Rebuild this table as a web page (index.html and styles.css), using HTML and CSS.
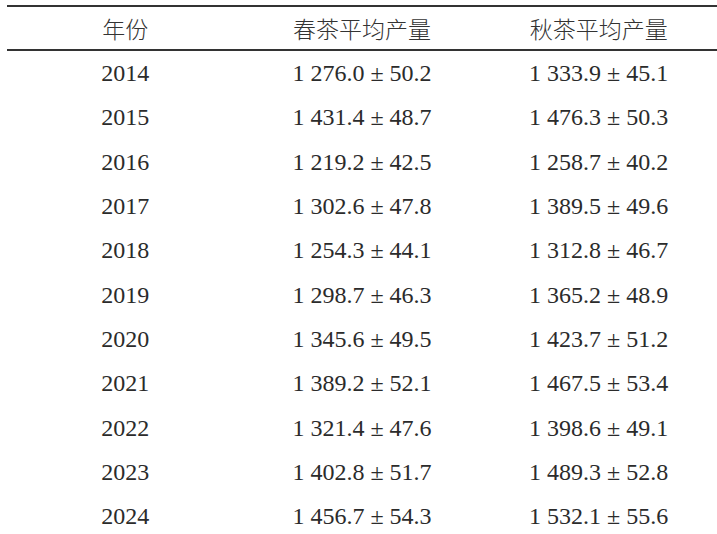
FILE: index.html
```html
<!DOCTYPE html>
<html lang="zh-CN">
<head>
<meta charset="utf-8">
<link rel="stylesheet" href="styles.css">
</head>
<body>
<div class="wrap">
<table class="data">
<thead>
<tr><th>年份</th><th>春茶平均产量</th><th>秋茶平均产量</th></tr>
</thead>
<tbody>
<tr><td>2014</td><td>1 276.0 ± 50.2</td><td>1 333.9 ± 45.1</td></tr>
<tr><td>2015</td><td>1 431.4 ± 48.7</td><td>1 476.3 ± 50.3</td></tr>
<tr><td>2016</td><td>1 219.2 ± 42.5</td><td>1 258.7 ± 40.2</td></tr>
<tr><td>2017</td><td>1 302.6 ± 47.8</td><td>1 389.5 ± 49.6</td></tr>
<tr><td>2018</td><td>1 254.3 ± 44.1</td><td>1 312.8 ± 46.7</td></tr>
<tr><td>2019</td><td>1 298.7 ± 46.3</td><td>1 365.2 ± 48.9</td></tr>
<tr><td>2020</td><td>1 345.6 ± 49.5</td><td>1 423.7 ± 51.2</td></tr>
<tr><td>2021</td><td>1 389.2 ± 52.1</td><td>1 467.5 ± 53.4</td></tr>
<tr><td>2022</td><td>1 321.4 ± 47.6</td><td>1 398.6 ± 49.1</td></tr>
<tr><td>2023</td><td>1 402.8 ± 51.7</td><td>1 489.3 ± 52.8</td></tr>
<tr><td>2024</td><td>1 456.7 ± 54.3</td><td>1 532.1 ± 55.6</td></tr>
</tbody>
</table>
</div>
</body>
</html>
```
FILE: styles.css
```css
html, body {
  margin: 0;
  padding: 0;
  background: #ffffff;
}
.wrap {
  padding: 5px 0 0 7px;
  overflow: hidden;
}
.data {
  width: 710px;
  border-collapse: collapse;
  table-layout: fixed;
  color: #2b2b2b;
}
.data thead tr {
  border-top: 2px solid #333333;
  border-bottom: 2px solid #333333;
}
.data th {
  height: 42px;
  padding: 0;
  font-family: "Noto Sans CJK SC", sans-serif;
  font-weight: 300;
  font-size: 23px;
  text-align: center;
  vertical-align: middle;
  line-height: 1;
  color: #333333;
}
.data td {
  height: 44.3px;
  padding: 0;
  font-family: "Liberation Serif", "Times New Roman", serif;
  font-size: 24px;
  text-align: center;
  vertical-align: middle;
  line-height: 1;
}
```
